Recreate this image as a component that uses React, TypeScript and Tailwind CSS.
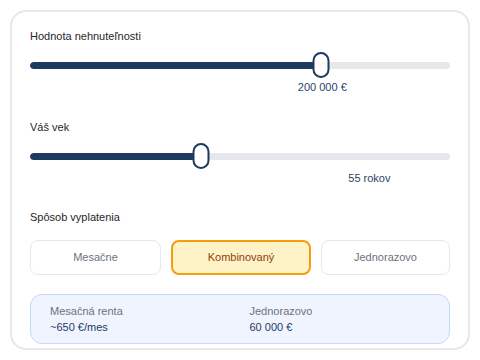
import { useState } from 'react'

type SliderProps = {
  title: string
  percent: number
  label: string
  labelAt: number
  gapTop: string
}

function Slider({ title, percent, label, labelAt, gapTop }: SliderProps) {
  return (
    <div className={gapTop}>
      <div className="text-[11px] leading-4 text-[#27272a]">{title}</div>
      <div className="relative mt-[8px] flex h-[26px] items-center">
        <div className="h-[7px] w-full overflow-hidden rounded-full bg-[#e5e7eb]">
          <div className="h-full rounded-full bg-[#1f3a5f]" style={{ width: `${percent}%` }} />
        </div>
        <div
          className="absolute top-0 h-[26px] w-[17px] -translate-x-1/2 rounded-full border-2 border-[#1f3a5f] bg-white"
          style={{ left: `${percent}%` }}
        />
      </div>
      <div className="relative mt-[1px] h-4">
        <span
          className="absolute -translate-x-1/2 whitespace-nowrap text-[11px] leading-4 text-[#2d4468]"
          style={{ left: `${labelAt}%` }}
        >
          {label}
        </span>
      </div>
    </div>
  )
}

const options = ['Mesačne', 'Kombinovaný', 'Jednorazovo']

export default function App() {
  const [mode, setMode] = useState('Kombinovaný')

  return (
    <div className="h-[360px] w-[480px] bg-white p-[10px] font-['Liberation_Sans',Arial,sans-serif]">
      <div className="rounded-2xl border-2 border-[#e5e7eb] bg-white px-[18px] pb-[4px] pt-[16px]">
        <Slider title="Hodnota nehnuteľnosti" percent={69.2} label="200 000 €" labelAt={69.6} gapTop="" />
        <Slider title="Váš vek" percent={40.6} label="55 rokov" labelAt={80.8} gapTop="mt-[24px]" />

        <div className="mt-[23px] text-[11px] leading-4 text-[#27272a]">Spôsob vyplatenia</div>
        <div className="mt-[15px] grid grid-cols-[131px_140px_1fr] gap-[10px]">
          {options.map((o) => {
            const active = o === mode
            return (
              <button
                key={o}
                onClick={() => setMode(o)}
                className={`flex h-[35px] items-center justify-center rounded-lg text-[11px] ${
                  active
                    ? 'border-2 border-[#f59e0b] bg-[#fef3c7] text-[#92400e]'
                    : 'border border-[#e5e7eb] bg-white text-[#6b7280]'
                }`}
              >
                {o}
              </button>
            )
          })}
        </div>

        <div className="mt-[19px] grid grid-cols-2 gap-5 rounded-xl border border-[#c7d7fe] bg-[#eff4ff] py-2 pl-[19px] pr-5">
          <div>
            <div className="text-[11px] leading-4 text-[#6b7280]">Mesačná renta</div>
            <div className="text-[11px] leading-4 text-[#1f3a5f]">~650 €/mes</div>
          </div>
          <div>
            <div className="text-[11px] leading-4 text-[#6b7280]">Jednorazovo</div>
            <div className="text-[11px] leading-4 text-[#1f3a5f]">60 000 €</div>
          </div>
        </div>
      </div>
    </div>
  )
}
